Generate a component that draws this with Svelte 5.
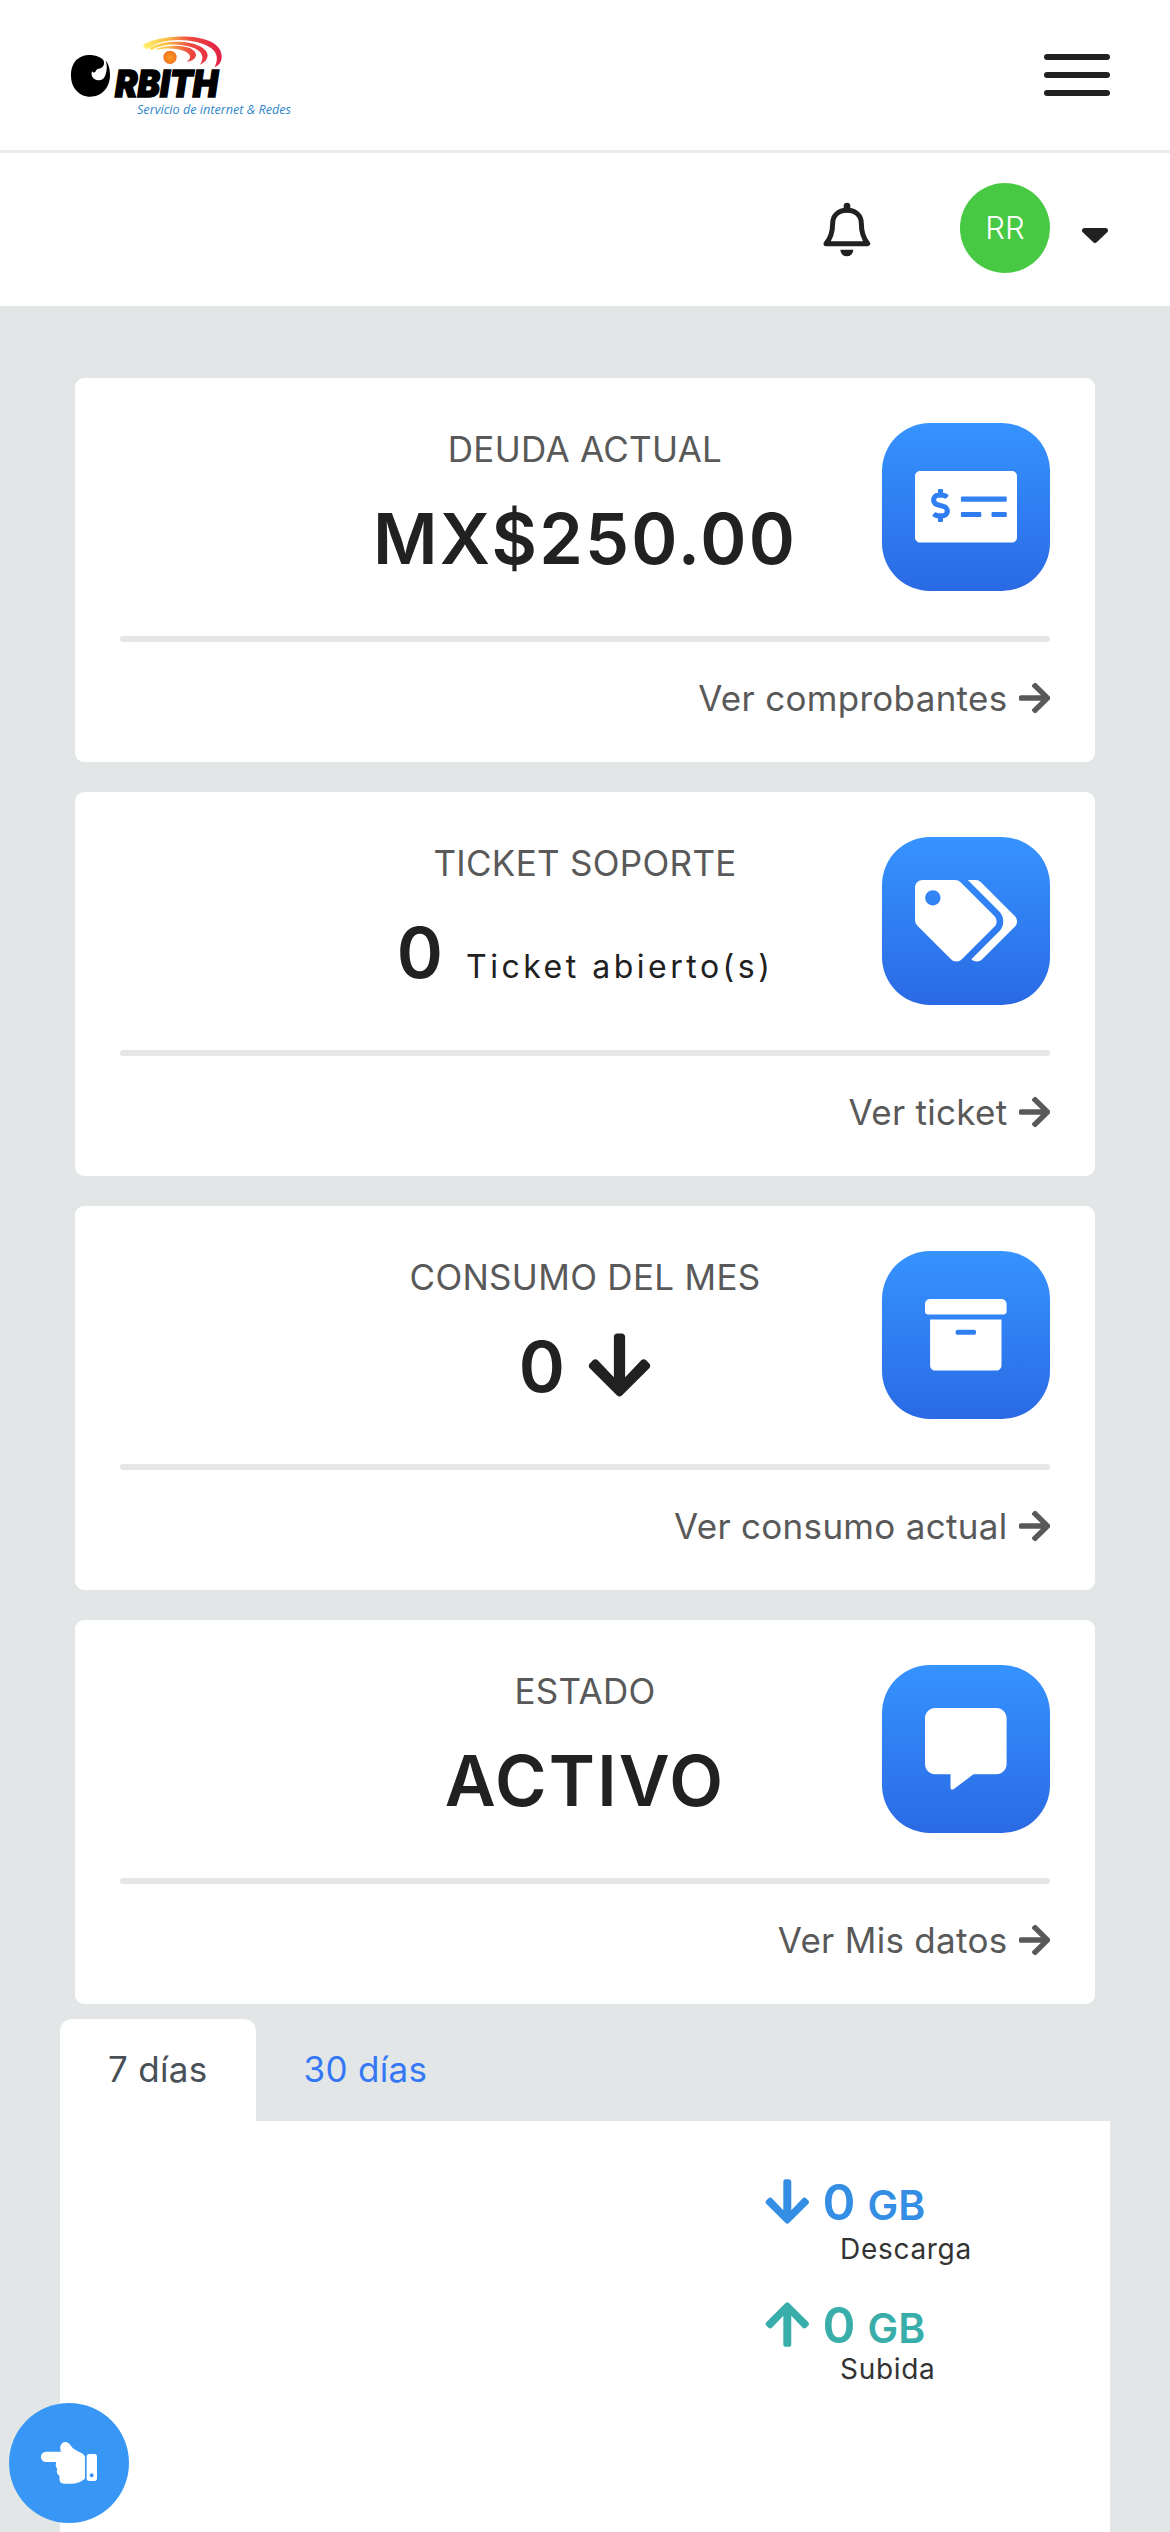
<script lang="ts">
  interface Card {
    title: string;
    value: string;
    note?: string;
    arrow?: boolean;
    link: string;
    iconWidth: number;
    icon: string;
  }

  const ARROW_RIGHT =
    "M190.5 66.9l22.2-22.2c9.4-9.4 24.6-9.4 33.9 0L441 239c9.4 9.4 9.4 24.6 0 33.9L246.6 467.3c-9.4 9.4-24.6 9.4-33.9 0l-22.2-22.2c-9.5-9.5-9.3-25 .4-34.3L311.4 296H24c-13.3 0-24-10.7-24-24v-32c0-13.3 10.7-24 24-24h287.4L190.9 101.2c-9.8-9.3-10-24.8-.4-34.3z";
  const ARROW_DOWN =
    "M413.1 222.5l22.2 22.2c9.4 9.4 9.4 24.6 0 33.9L241 473c-9.4 9.4-24.6 9.4-33.9 0L12.7 278.6c-9.4-9.4-9.4-24.6 0-33.9l22.2-22.2c9.5-9.4 25-9.3 34.3.4L184 343.4V56c0-13.3 10.7-24 24-24h32c13.3 0 24 10.7 24 24v287.4l114.8-120.5c9.3-9.8 24.8-10 34.3-.4z";
  const ARROW_UP =
    "M34.9 289.5l-22.2-22.2c-9.4-9.4-9.4-24.6 0-33.9L207 39c9.4-9.4 24.6-9.4 33.9 0l194.3 194.3c9.4 9.4 9.4 24.6 0 33.9l-22.2 22.2c-9.5 9.5-25 9.3-34.3-.4L264 168.6V456c0 13.3-10.7 24-24 24h-32c-13.3 0-24-10.7-24-24V168.6L69.2 289.1c-9.3 9.8-24.8 10-34.3.4z";

  const cards: Card[] = [
    {
      title: "DEUDA ACTUAL",
      value: "MX$250.00",
      link: "Ver comprobantes",
      iconWidth: 640,
      icon: "M608 32H32C14.33 32 0 46.33 0 64v384c0 17.67 14.33 32 32 32h576c17.67 0 32-14.33 32-32V64c0-17.67-14.33-32-32-32zM176 327.88V344c0 4.42-3.58 8-8 8h-16c-4.42 0-8-3.58-8-8v-16.29c-11.29-.58-22.27-4.52-31.37-11.35-3.9-2.93-4.1-8.77-.57-12.14l11.75-11.21c2.77-2.64 6.89-2.76 10.13-.73 3.87 2.42 8.26 3.72 12.82 3.72h28.11c6.5 0 11.8-5.92 11.8-13.19 0-5.95-3.61-11.19-8.77-12.73l-45-13.5c-18.59-5.58-31.58-23.42-31.58-43.39 0-24.52 19.05-44.44 42.67-45.07V152c0-4.42 3.58-8 8-8h16c4.42 0 8 3.58 8 8v16.29c11.29.58 22.27 4.51 31.37 11.35 3.9 2.93 4.1 8.77.57 12.14l-11.75 11.21c-2.77 2.64-6.89 2.76-10.13.73-3.87-2.43-8.26-3.72-12.82-3.72h-28.11c-6.5 0-11.8 5.92-11.8 13.19 0 5.95 3.61 11.19 8.77 12.73l45 13.5c18.59 5.58 31.58 23.42 31.58 43.39 0 24.53-19.05 44.44-42.67 45.07zM416 312c0 4.42-3.58 8-8 8H296c-4.42 0-8-3.58-8-8v-16c0-4.42 3.58-8 8-8h112c4.42 0 8 3.58 8 8v16zm160 0c0 4.42-3.58 8-8 8h-80c-4.42 0-8-3.58-8-8v-16c0-4.42 3.58-8 8-8h80c4.42 0 8 3.58 8 8v16zm0-96c0 4.42-3.58 8-8 8H296c-4.42 0-8-3.58-8-8v-16c0-4.42 3.58-8 8-8h272c4.42 0 8 3.58 8 8v16z",
    },
    {
      title: "TICKET SOPORTE",
      value: "0",
      note: "Ticket abierto(s)",
      link: "Ver ticket",
      iconWidth: 640,
      icon: "M497.941 225.941L286.059 14.059A48 48 0 0 0 252.118 0H48C21.49 0 0 21.49 0 48v204.118a48 48 0 0 0 14.059 33.941l211.882 211.882c18.744 18.745 49.136 18.746 67.882 0l204.118-204.118c18.745-18.745 18.745-49.137 0-67.882zM112 160c-26.51 0-48-21.49-48-48s21.49-48 48-48 48 21.49 48 48-21.49 48-48 48zm513.941 133.823L421.823 497.941c-18.745 18.745-49.137 18.745-67.882 0l-.36-.36L527.64 323.522c16.999-16.999 26.362-39.6 26.362-63.64s-9.362-46.641-26.362-63.64L331.397 0h48.721a48 48 0 0 1 33.941 14.059l211.882 211.882c18.745 18.745 18.745 49.137 0 67.882z",
    },
    {
      title: "CONSUMO DEL MES",
      value: "0",
      arrow: true,
      link: "Ver consumo actual",
      iconWidth: 512,
      icon: "M32 448c0 17.7 14.3 32 32 32h384c17.7 0 32-14.3 32-32V160H32v288zm160-212c0-6.6 5.4-12 12-12h104c6.6 0 12 5.4 12 12v8c0 6.6-5.4 12-12 12H204c-6.6 0-12-5.4-12-12v-8zM480 32H32C14.3 32 0 46.3 0 64v48c0 8.8 7.2 16 16 16h480c8.8 0 16-7.2 16-16V64c0-17.7-14.3-32-32-32z",
    },
    {
      title: "ESTADO",
      value: "ACTIVO",
      link: "Ver Mis datos",
      iconWidth: 512,
      icon: "M448 0H64C28.7 0 0 28.7 0 64v288c0 35.3 28.7 64 64 64h96v84c0 9.8 11.2 15.5 19.1 9.7L304 416h144c35.3 0 64-28.7 64-64V64c0-35.3-28.7-64-64-64z",
    },
  ];

  const tabs = ["7 días", "30 días"];
  let active = $state(0);

  const totals = [
    { kind: "down", label: "Descarga", path: ARROW_DOWN },
    { kind: "up", label: "Subida", path: ARROW_UP },
  ];
</script>

<div class="page">
  <header class="topbar">
    <svg class="logo" width="230" height="76" viewBox="66 50 230 76" role="img" aria-label="Orbith">
      <defs>
        <linearGradient id="flare" gradientUnits="userSpaceOnUse" x1="308" x2="545" y1="0" y2="0">
          <stop offset="0" stop-color="#fff36a" />
          <stop offset="0.3" stop-color="#fbc04a" />
          <stop offset="0.6" stop-color="#ee4a40" />
          <stop offset="1" stop-color="#e21f45" />
        </linearGradient>
        <radialGradient id="ball">
          <stop offset="0" stop-color="#ff9a20" />
          <stop offset="1" stop-color="#ee7420" />
        </radialGradient>
      </defs>
      <g transform="translate(40 20) scale(0.33333)">
        <path
          d="M190 120C172 98 93 90 93 167C93 205 120 230 150 230C188 230 210 200 210 165C210 145 205 130 197 122C203 140 200 155 195 168C190 180 180 183 170 180C158 178 152 165 156 154C160 160 165 158 168 152C172 143 182 148 188 140C194 133 193 127 190 120Z"
          fill="#000"
        />
        <g fill="url(#flare)">
          <path d="M308 76C350 42 545 30 545 110C545 125 537 136 524 142C542 105 525 80 470 66C420 54 360 58 318 88Z" />
          <path d="M325 84C390 50 500 65 503 106C502 118 495 128 480 134C496 110 485 92 455 82C410 68 370 72 335 90Z" />
          <path d="M350 86C410 68 468 80 468 106C466 116 458 124 440 126C457 112 452 100 430 92C405 84 380 84 350 90Z" />
        </g>
        <circle cx="390" cy="112" r="20" fill="url(#ball)" />
      </g>
      <text class="brand" x="115" y="97" textLength="103" lengthAdjust="spacingAndGlyphs">RBITH</text>
      <text class="tagline" x="137" y="113.5" textLength="154" lengthAdjust="spacingAndGlyphs">Servicio de internet &amp; Redes</text>
    </svg>
    <button class="menu" aria-label="Menú">
      <span></span>
      <span></span>
      <span></span>
    </button>
  </header>

  <div class="userbar">
    <svg class="bell" width="48" height="56" viewBox="128 514 144 168" aria-hidden="true">
      <path d="M137 639C150 624 157 608 157 578C157 555 173 539 200 539C227 539 243 555 243 578C243 608 250 624 262 639Z" fill="none" stroke="#212121" stroke-width="15" stroke-linejoin="round" />
      <path d="M200 526V536" stroke="#212121" stroke-width="20" stroke-linecap="round" />
      <path d="M180 657H219A19.5 20 0 0 1 180 657Z" fill="#212121" />
    </svg>
    <div class="avatar">RR</div>
    <svg class="caret" width="28" height="17" viewBox="0 0 28 17" aria-hidden="true">
      <path d="M3.5 3.5H24.5L14 13.5Z" fill="#212121" stroke="#212121" stroke-width="5" stroke-linejoin="round" />
    </svg>
  </div>

  <main>
    <section class="cards">
      {#each cards as card (card.title)}
        <article class="card">
          <div class="card-top">
            <div class="card-text">
              <h6>{card.title}</h6>
              <div class="value">
                <span>{card.value}</span>
                {#if card.note}
                  <small>{card.note}</small>
                {/if}
                {#if card.arrow}
                  <svg class="value-arrow" width="63" height="72" viewBox="0 0 448 512" aria-hidden="true">
                    <path d={ARROW_DOWN} fill="currentColor" />
                  </svg>
                {/if}
              </div>
            </div>
            <div class="tile">
              <svg height="81.6" width={(card.iconWidth * 81.6) / 512} viewBox="0 0 {card.iconWidth} 512" aria-hidden="true">
                <path d={card.icon} fill="#fff" />
              </svg>
            </div>
          </div>
          <hr />
          <a class="card-link" href="#ver">
            <span>{card.link}</span>
            <svg width="31.5" height="36" viewBox="0 0 448 512" aria-hidden="true">
              <path d={ARROW_RIGHT} fill="currentColor" />
            </svg>
          </a>
        </article>
      {/each}
    </section>

    <section class="usage">
      <div class="tabs" role="tablist">
        {#each tabs as tab, i}
          <button role="tab" aria-selected={active === i} class:active={active === i} onclick={() => (active = i)}>
            {tab}
          </button>
        {/each}
      </div>
      <div class="panel">
        {#each totals as total (total.kind)}
          <div class="total {total.kind}">
            <div class="amount">
              <svg width="44.6" height="51" viewBox="0 0 448 512" aria-hidden="true">
                <path d={total.path} fill="currentColor" />
              </svg>
              <span class="number">0</span>
              <span class="unit">GB</span>
            </div>
            <div class="caption">{total.label}</div>
          </div>
        {/each}
      </div>
    </section>
  </main>

  <button class="fab" aria-label="Mostrar accesos">
    <svg width="58" height="44" viewBox="120 174 174 132" aria-hidden="true">
      <path d="M138 206H184C177 197 181 177 196 177C209 177 211 190 222 198C235 207 250 209 255 221V286C252 292 246 292 240 297C226 304 190 304 183 299C176 292 180 283 178 278C170 273 169 263 172 258C166 251 166 242 169 237H138A15.5 15.5 0 0 1 138 206Z" fill="#fff" />
      <path d="M268 213H284Q291 213 291 220V286Q291 294 283 294H268Q260 294 260 286V221Q260 213 268 213ZM275 271A6 6 0 1 0 275.1 271Z" fill="#fff" fill-rule="evenodd" />
    </svg>
  </button>
</div>

<style>
  :global(body) {
    background: #e2e6e7;
  }

  .page {
    width: 1170px;
    height: 2532px;
    overflow: hidden;
    display: flex;
    flex-direction: column;
    background: #e2e6e7;
    color: #212121;
    font-family: Inter, "Liberation Sans", sans-serif;
  }

  button {
    border: none;
    background: none;
    padding: 0;
    font: inherit;
    cursor: pointer;
  }

  .topbar {
    box-sizing: border-box;
    height: 153px;
    flex-shrink: 0;
    display: flex;
    align-items: center;
    justify-content: space-between;
    padding: 0 60px 0 66px;
    background: #fff;
    border-bottom: 3px solid #ebebeb;
  }

  .logo {
    overflow: visible;
    margin-top: 26px;
  }

  .brand {
    font: italic 900 37px Inter, sans-serif;
    fill: #000;
    stroke: #000;
    stroke-width: 1.5px;
  }

  .tagline {
    font: italic 400 13px "Open Sans", sans-serif;
    fill: #2f86cc;
  }

  .menu {
    width: 66px;
    display: flex;
    flex-direction: column;
    gap: 12px;
  }

  .menu span {
    height: 6px;
    border-radius: 3px;
    background: #212121;
  }

  .userbar {
    box-sizing: border-box;
    height: 153px;
    flex-shrink: 0;
    display: flex;
    align-items: center;
    justify-content: flex-end;
    padding-right: 61px;
    background: #fff;
  }

  .bell {
    margin-right: 89px;
  }

  .avatar {
    width: 90px;
    height: 90px;
    margin: 0 31px 3px 0;
    border-radius: 50%;
    background: #47c944;
    color: #fff;
    font-size: 31px;
    font-weight: 300;
    line-height: 90px;
    text-align: center;
  }

  .caret {
    margin-top: 12px;
  }

  .cards {
    display: flex;
    flex-direction: column;
    gap: 30px;
    padding: 72px 75px 15px;
  }

  .card {
    box-sizing: border-box;
    height: 384px;
    padding: 45px 45px 0;
    border-radius: 9px;
    background: #fff;
  }

  .card-top {
    display: grid;
    grid-template: 168px / 168px 1fr 168px;
  }

  .card-text {
    grid-column: 2;
    text-align: center;
  }

  h6 {
    margin: 0;
    color: #595959;
    font-size: 35px;
    font-weight: 400;
    line-height: 53px;
    letter-spacing: 0.3px;
  }

  .value {
    display: flex;
    justify-content: center;
    align-items: baseline;
    gap: 21px;
    font-size: 70px;
    font-weight: 600;
    line-height: 125px;
    letter-spacing: 2.2px;
    white-space: nowrap;
  }

  .value small {
    font-size: 32px;
    font-weight: 400;
    letter-spacing: 3.5px;
  }

  .value-arrow {
    align-self: center;
    margin-bottom: 3px;
  }

  .tile {
    display: flex;
    align-items: center;
    justify-content: center;
    border-radius: 48px;
    background: linear-gradient(#3693ff, #2a6ae4);
  }

  hr {
    height: 6px;
    margin: 45px 0 0;
    border: none;
    border-radius: 3px;
    background: #e6e6e6;
  }

  .card-link {
    display: flex;
    align-items: center;
    justify-content: flex-end;
    gap: 11px;
    height: 112px;
    color: #595959;
    font-size: 35px;
    letter-spacing: 0.3px;
    text-decoration: none;
  }

  .usage {
    padding: 0 60px;
  }

  .tabs {
    display: flex;
    height: 102px;
  }

  .tabs button {
    padding: 0 48px 2px;
    border-radius: 12px 12px 0 0;
    color: #3478f6;
    font-size: 35px;
    letter-spacing: 0.3px;
  }

  .tabs button.active {
    background: #fff;
    color: #495057;
  }

  .panel {
    display: flex;
    flex-direction: column;
    height: 420px;
    padding: 50px 0 0 705px;
    background: #fff;
  }

  .total {
    height: 123px;
  }

  .amount {
    display: flex;
    align-items: baseline;
    height: 60px;
    line-height: 62px;
    font-weight: 600;
  }

  .amount svg {
    align-self: center;
    margin-right: 13px;
  }

  .number {
    width: 45px;
    font-size: 50px;
  }

  .unit {
    font-size: 41px;
  }

  .down .amount {
    color: #348ee3;
  }

  .up .amount {
    color: #38ada9;
  }

  .caption {
    padding-left: 75px;
    color: #333;
    font-size: 28px;
    line-height: 36px;
    letter-spacing: 0.7px;
  }

  .up .caption {
    margin-top: -3px;
  }

  .fab {
    position: fixed;
    left: 9px;
    top: 2403px;
    width: 120px;
    height: 120px;
    display: flex;
    align-items: center;
    justify-content: center;
    border-radius: 50%;
    background: #3897f4;
  }
</style>
